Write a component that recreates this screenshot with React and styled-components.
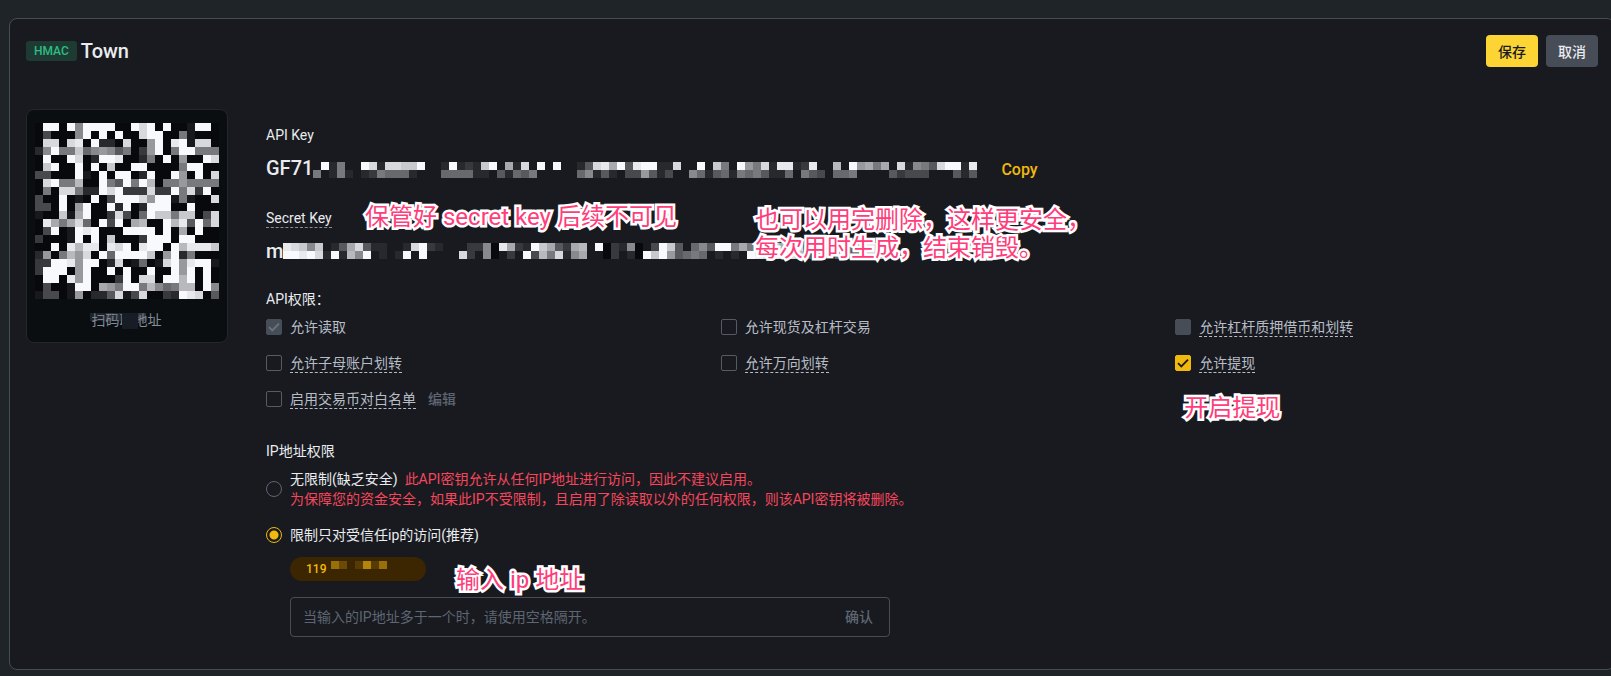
import React from 'react'
import styled, { createGlobalStyle, css } from 'styled-components'

const GlobalStyle = createGlobalStyle`
    * {
        box-sizing: border-box;
    }

    body {
        margin: 0;
        overflow-x: hidden;
        background: #1f2428;
        color: #eaecef;
        font-family: Roboto, "Noto Sans CJK SC", sans-serif;
        font-size: 14px;
        line-height: 20px;
    }

    button, input {
        font-family: inherit;
        margin: 0;
    }
`

const Panel = styled.main`
    margin: 18px -4px 6px 9px;
    padding: 16px 16px 32px 16px;
    background: #181a1f;
    border: 1px solid #474d57;
    border-radius: 8px;
`

const Header = styled.header`
    display: flex;
    align-items: center;
    gap: 4px;
    margin-bottom: 42px;

    & h1 {
        flex: 1;
        margin: 0;
        font-size: 20px;
        line-height: 32px;
        font-weight: 500;
    }
`

const Badge = styled.span`
    padding: 0 8px;
    border-radius: 3px;
    background: #1d3a33;
    color: #2ebd85;
    font-size: 12px;
    font-weight: 500;
`

const Actions = styled.div`
    display: flex;
    gap: 8px;
`

const Button = styled.button`
    height: 32px;
    padding: 0 12px;
    border: none;
    border-radius: 4px;
    background: ${({ $primary }) => ($primary ? '#fcd535' : '#474d57')};
    color: ${({ $primary }) => ($primary ? '#181a20' : '#eaecef')};
    font-size: 14px;
    font-weight: 500;
    cursor: pointer;
`

const TextButton = styled.button`
    padding: 0;
    border: none;
    background: none;
    color: ${({ $accent }) => ($accent ? '#f0b90b' : '#5e6673')};
    font-size: ${({ $accent }) => ($accent ? '16px' : '14px')};
    font-weight: 500;
    line-height: 20px;
    cursor: pointer;
`

const Body = styled.div`
    display: flex;
    align-items: flex-start;
    gap: 38px;
`

const QrCard = styled.figure`
    flex: none;
    display: flex;
    flex-direction: column;
    align-items: center;
    gap: 11px;
    width: 202px;
    height: 234px;
    margin: 0;
    padding: 13px 8px 0 7px;
    border: 1px solid #23262c;
    border-radius: 8px;
    background: #0b0e11;
`

const QrCaption = styled.figcaption`
    position: relative;
    color: #848e9c;

    & svg {
        position: absolute;
        left: -2px;
        top: 3px;
    }
`

const Details = styled.div`
    flex: 1;
    min-width: 0;
    padding-top: 16px;
`

const Field = styled.div`
    position: relative;
    display: flex;
    flex-direction: column;
    align-items: flex-start;
    gap: 11px;
    margin-bottom: ${({ $last }) => ($last ? '26px' : '28px')};
`

const dashed = css`
    border-bottom: 1px dashed ${({ $soft }) => ($soft ? '#848e9c' : '#b7bdc6')};
`

const Label = styled.span`
    height: 20px;
    ${({ $dashed }) => $dashed && dashed}
`

const Value = styled.div`
    display: flex;
    align-items: center;
    height: 24px;
    font-size: 20px;
    font-weight: 500;
    white-space: nowrap;

    & svg {
        margin-right: 24px;
    }

    & svg, & button {
        margin-top: ${({ $low }) => ($low ? '4px' : '0')};
    }
`

const Section = styled.fieldset`
    min-width: 0;
    margin: 0 0 ${({ $last }) => ($last ? '0' : '32px')};
    padding: 0;
    border: none;

    & legend {
        margin-bottom: 8px;
        padding: 0;
    }
`

const Permissions = styled.div`
    display: grid;
    grid-template-columns: repeat(3, 1fr);
    gap: 16px 32px;
`

const Permission = styled.div`
    position: relative;
    display: flex;
    align-items: center;
    gap: 12px;
    height: 20px;
    color: #b7bdc6;

    & label {
        display: flex;
        align-items: center;
        gap: 8px;
        height: 20px;
    }
`

const Tick = styled.span`
    display: grid;
    width: 16px;
    height: 16px;

    & input, & svg {
        grid-area: 1 / 1;
    }

    & svg {
        pointer-events: none;
    }
`

const TickInput = styled.input`
    appearance: none;
    width: 16px;
    height: 16px;
    border: 1px solid #535b67;
    border-radius: 2px;

    &:checked {
        background: #f0b90b;
        border-color: #f0b90b;
    }

    &:disabled {
        background: #474d57;
        border-color: #474d57;
    }
`

const Radio = styled.input`
    appearance: none;
    flex: none;
    width: 16px;
    height: 16px;
    border: 1px solid #5e6673;
    border-radius: 50%;

    &:checked {
        border-color: #f0b90b;
        background: radial-gradient(circle, #f0b90b 4px, transparent 5px);
    }
`

const IpOption = styled.label`
    display: flex;
    align-items: center;
    gap: 8px;
    margin-bottom: ${({ $last }) => ($last ? '12px' : '16px')};

    & em {
        color: #f6465d;
        font-style: normal;
    }
`

const IpArea = styled.div`
    display: flex;
    flex-direction: column;
    gap: 16px;
    max-width: 624px;
    padding-left: 24px;
`

const IpTag = styled.div`
    position: relative;
    display: flex;
    align-items: center;
    gap: 5px;
    width: 136px;
    height: 24px;
    padding-left: 16px;
    border-radius: 12px;
    background: #3c2601;
    color: #f0b90b;
    font-size: 12px;
    font-weight: 500;
`

const IpBox = styled.div`
    display: flex;
    align-items: center;
    height: 40px;
    padding: 0 16px 0 12px;
    border: 1px solid #474d57;
    border-radius: 4px;

    & input {
        flex: 1;
        min-width: 0;
        padding: 0;
        border: none;
        outline: none;
        background: none;
        color: #eaecef;
        font-size: 14px;
    }

    & input::placeholder {
        color: #5e6673;
        opacity: 1;
    }
`

// Outlined hints that float over the form
const Note = styled.div`
    position: absolute;
    left: ${({ $x }) => $x}px;
    top: ${({ $y }) => $y}px;
    z-index: 1;
    color: #ff3d7b;
    font-size: 24px;
    font-weight: 400;
    line-height: 28px;
    white-space: nowrap;
    -webkit-text-stroke: 5px #fff;
    paint-order: stroke fill;
    stroke-linejoin: round;
`

/* One hex digit per 8px cell: 0 is black, f is white, "." is empty */
const QR_ROWS = [
    '0ff0f8ffff00fdf0f001ff0',
    '040008f0f0f00dff0071000',
    '0dd0de0f220d009f0ef1dd0',
    '28f77c689857039f07ff777',
    '0f00fd02ffe00270f0900fd',
    '0cf00f0f0c00ff00007ff00',
    '44000f10f0ff02f00f90f0d',
    '0df77b00f75f7fb07797777',
    '070dd722fdf333d33f7d3f0',
    '400f010f04fffd9ff17100d',
    '440f09f00f2f02fff00f000',
    '100c1af003d406fcc7cc04d',
    '0ea7ad60f4f0ab00fbe5f6d',
    '04f01fef000ffff0f0a0f00',
    '30001f0f0c0003fff0ff000',
    '00f0ebee0edf0eff0fbeeec',
    '2907b9d0f6ffffc09f27000',
    '33ffe9ff02d01601df9eff1',
    '3fff09f00f0f00f00f9f0f0',
    '0ff0e9f0003f0dd0ffbf0f0',
    '04001ff0a97ff7b867bb0f8',
    '1440190225d14d0032fed05',
]

const KEY_ROWS = [
    '.f27..fd2ddccf..2f232cf.a2d.f.f..25deaf5eff22d..f.c7.f97d2ee23e..b.f9a7a.d2875dff2e',
    '7.272.2376662...666622.52657.....68252.449524..8625627675226.754.667....53444...525',
]

const SECRET_ROWS = [
    'edc8c.25ad522..2df32...3380ea32fca53ab.f03280.4fc5.685ff7a78dcaed6..2576cdc53',
    'ffefd2f2b8f.2.2f.f....d3.80.3.f4b7d28a..03.20fcf95676.2.2.fedecdb52.3675dcb42',
]

const CAPTION_ROWS = ['4465226', '....22.']

const CAPTION_COLORS = { 2: '#181c24', 4: '#5a617144', 5: '#4a516166', 6: '#6a728466' }
const TAG_COLORS = { 3: '#573a04', 4: '#6b4a06', 8: '#98700a', 10: '#b3850b' }

function Mosaic({ rows, title, colors }) {
    const cell = 8
    const width = Math.max(...rows.map((row) => row.length)) * cell
    const height = rows.length * cell
    const fill = (digit) => {
        const v = parseInt(digit, 16)
        if (colors) return colors[v]
        return `rgb(${v * 16 + 8}, ${v * 16 + 9}, ${v * 16 + 12})`
    }

    return <svg width={width} height={height} viewBox={`0 0 ${width} ${height}`} shapeRendering="crispEdges" role="img" aria-label={title}>
        {rows.map((row, y) => [...row].map((digit, x) => (
            digit !== '.' &&
            <rect key={`${x}-${y}`} x={x * cell} y={y * cell} width={cell} height={cell} fill={fill(digit)} />
        )))}
    </svg>
}

const permissions = [
    { name: '允许读取', checked: true, disabled: true, plain: true },
    { name: '允许现货及杠杆交易', plain: true },
    { name: '允许杠杆质押借币和划转', disabled: true },
    { name: '允许子母账户划转' },
    { name: '允许万向划转' },
    { name: '允许提现', checked: true, note: '开启提现' },
    { name: '启用交易币对白名单', edit: true },
]

function PermissionItem({ name, checked, disabled, plain, note, edit }) {
    return <Permission>
        <label>
            <Tick>
                <TickInput type="checkbox" defaultChecked={checked} disabled={disabled} />
                {checked &&
                    <svg width="16" height="16" viewBox="0 0 16 16" fill="none" stroke={disabled ? '#6b7380' : '#181a20'} strokeWidth="1.8">
                        <path d="M3 8.2L6.3 11.5L13 4.6" />
                    </svg>
                }
            </Tick>
            <Label $dashed={!plain}>{name}</Label>
        </label>
        {edit && <TextButton type="button">编辑</TextButton>}
        {note && <Note $x={9} $y={41}>{note}</Note>}
    </Permission>
}

function App() {
    return <>
        <GlobalStyle />
        <Panel>
            <Header>
                <Badge>HMAC</Badge>
                <h1>Town</h1>
                <Actions>
                    <Button type="button" $primary>保存</Button>
                    <Button type="button">取消</Button>
                </Actions>
            </Header>
            <Body>
                <QrCard>
                    <Mosaic rows={QR_ROWS} title="QR" />
                    <QrCaption>
                        扫码取地址
                        <Mosaic rows={CAPTION_ROWS} colors={CAPTION_COLORS} />
                    </QrCaption>
                </QrCard>
                <Details>
                    <Field>
                        <Label>API Key</Label>
                        <Value $low>
                            GF71
                            <Mosaic rows={KEY_ROWS} title="API Key" />
                            <TextButton type="button" $accent>Copy</TextButton>
                        </Value>
                    </Field>
                    <Field $last>
                        <Label $dashed $soft>Secret Key</Label>
                        <Value>
                            m
                            <Mosaic rows={SECRET_ROWS} title="Secret Key" />
                        </Value>
                        <Note $x={99} $y={-5}>保管好 secret key 后续不可见</Note>
                        <Note $x={489} $y={-2}>也可以用完删除，这样更安全，<br />每次用时生成，结束销毁。</Note>
                    </Field>
                    <Section>
                        <legend>API权限：</legend>
                        <Permissions>
                            {permissions.map((item) => <PermissionItem key={item.name} {...item} />)}
                        </Permissions>
                    </Section>
                    <Section $last>
                        <legend>IP地址权限</legend>
                        <IpOption>
                            <Radio type="radio" name="ip" />
                            <span>
                                无限制(缺乏安全)&nbsp; <em>此API密钥允许从任何IP地址进行访问，因此不建议启用。<br />
                                为保障您的资金安全，如果此IP不受限制，且启用了除读取以外的任何权限，则该API密钥将被删除。</em>
                            </span>
                        </IpOption>
                        <IpOption $last>
                            <Radio type="radio" name="ip" defaultChecked />
                            <span>限制只对受信任ip的访问(推荐)</span>
                        </IpOption>
                        <IpArea>
                            <IpTag>
                                119
                                <Mosaic rows={['84.3a38.', '........']} colors={TAG_COLORS} />
                                <Note $x={166} $y={9}>输入 ip 地址</Note>
                            </IpTag>
                            <IpBox>
                                <input type="text" aria-label="IP地址" placeholder="当输入的IP地址多于一个时，请使用空格隔开。" />
                                <TextButton type="button">确认</TextButton>
                            </IpBox>
                        </IpArea>
                    </Section>
                </Details>
            </Body>
        </Panel>
    </>
}

export default App
